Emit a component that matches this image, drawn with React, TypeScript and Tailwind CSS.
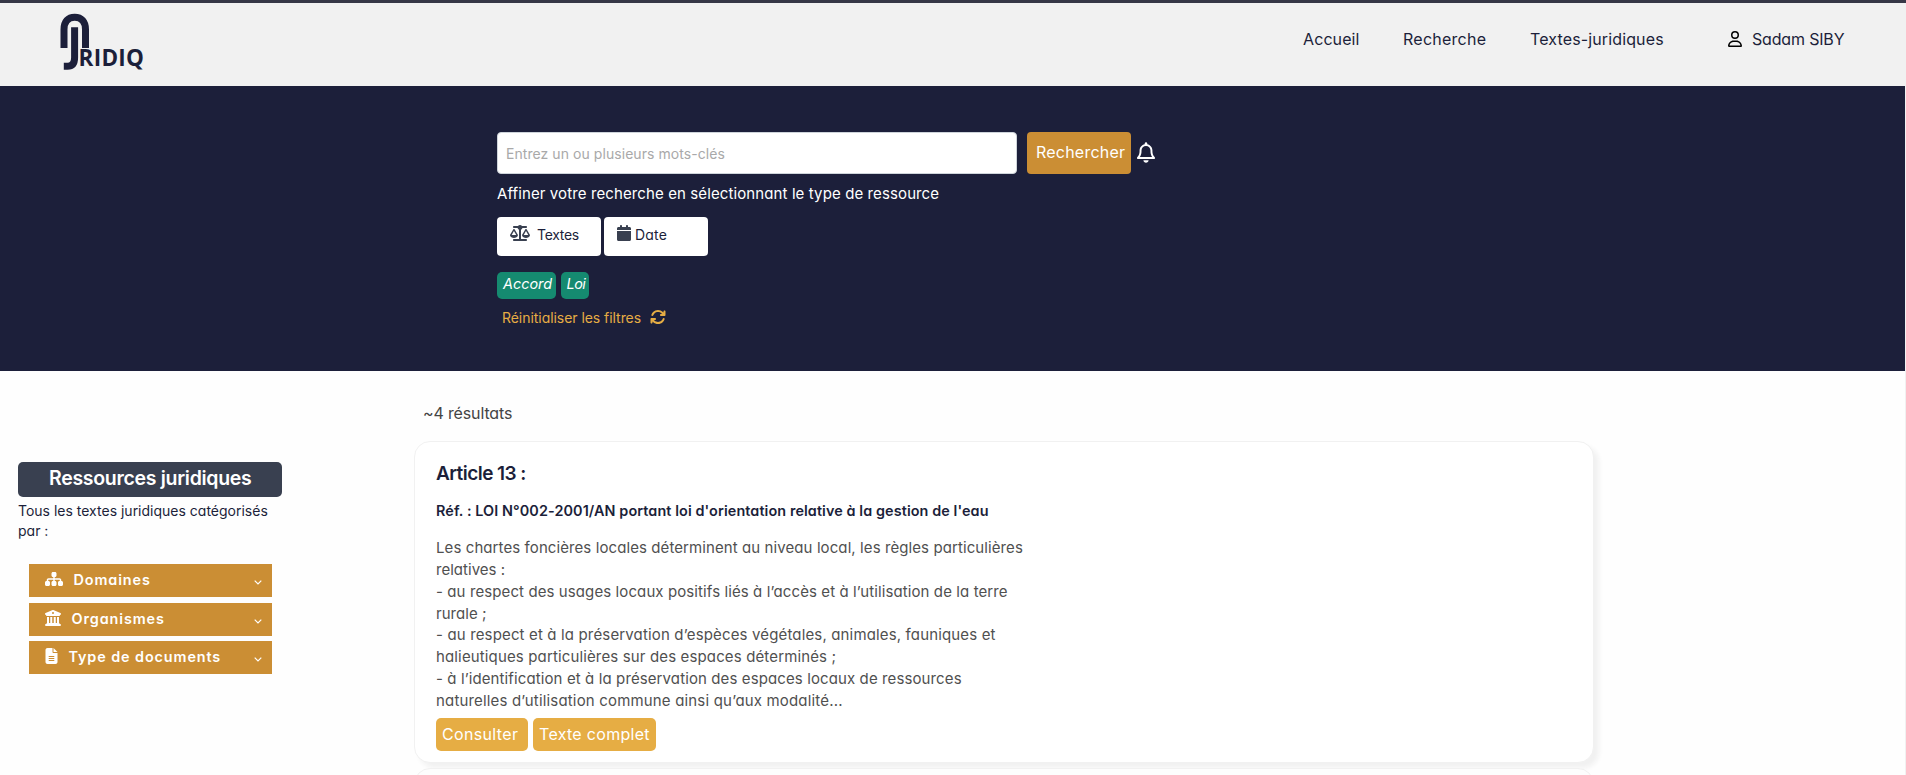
import React from "react";
import {
  FaArrowsRotate,
  FaBuildingColumns,
  FaCalendar,
  FaFileLines,
  FaRegBell,
  FaRegUser,
  FaScaleBalanced,
  FaSitemap,
} from "react-icons/fa6";

function Logo() {
  return (
    <svg width="90" height="62" viewBox="0 0 90 62" className="shrink-0" aria-label="Jridiq">
      <g transform="translate(-58 -11)">
        <path d="M64 48V29.5C64 21.5 68 17.3 74.7 17.3S85.5 21.5 85.5 29.5V48" fill="none" stroke="#1c1f3a" strokeWidth="7" />
        <path d="M74.6 27.3V57.5C74.6 63.5 72 66.3 67.5 66.3H63.8" fill="none" stroke="#1c1f3a" strokeWidth="7" />
        <text
          x="78.5"
          y="66"
          fontFamily="Open Sans, Noto Sans, sans-serif"
          fontWeight="700"
          fontSize="22.5"
          textLength="65.5"
          lengthAdjust="spacing"
          fill="#1c1f3a"
          stroke="#f1f1f1"
          strokeWidth="0.8"
          paintOrder="stroke"
        >
          RIDIQ
        </text>
      </g>
    </svg>
  );
}

function Header() {
  return (
    <header className="flex h-[86px] items-start border-t-[3px] border-[#363746] bg-[#f1f1f1] pl-[58px] text-base leading-6 text-[#1c1f3a]">
      <div className="pt-2">
        <Logo />
      </div>
      <nav className="ml-auto flex w-[603px] pt-[24px]">
        <a className="w-[100px] tracking-[0.1px]">Accueil</a>
        <a className="w-[127px] tracking-[0.25px]">Recherche</a>
        <a className="w-[198px] tracking-[0.13px]">Textes-juridiques</a>
        <a className="flex items-center">
          <FaRegUser className="h-4 w-3.5 text-black" />
          <span className="ml-[10px] tracking-[-0.17px]">Sadam SIBY</span>
        </a>
      </nav>
    </header>
  );
}

function Hero() {
  return (
    <section className="mr-px h-[285px] bg-[#1c1f3a] pl-[497px] pt-[46px]">
      <div className="flex items-center">
        <input
          className="h-[42px] w-[520px] rounded border border-[#ced4da] bg-white px-2 text-sm tracking-[0.06px] placeholder:text-[#a9a9a9]"
          placeholder="Entrez un ou plusieurs mots-clés"
        />
        <button className="ml-[10px] h-[42px] w-[104px] rounded bg-[#cb8e34] pb-[2px] pl-[9px] text-left text-base tracking-[0.22px] text-white">
          Rechercher
        </button>
        <FaRegBell className="mb-[2px] ml-1.5 h-[21px] w-[18px] text-white" />
      </div>
      <p className="mt-[8px] h-6 text-[15px] leading-6 tracking-[0.11px] text-white">
        Affiner votre recherche en sélectionnant le type de ressource
      </p>
      <div className="mt-[11px] flex gap-[3px] text-sm leading-5 text-[#1c1f3a]">
        <button className="flex h-[39px] w-[104px] items-start rounded bg-white pl-[13px] pt-2">
          <FaScaleBalanced className="h-4 w-5 text-[#394050]" />
          <span className="ml-[7px] tracking-[-0.3px]">Textes</span>
        </button>
        <button className="flex h-[39px] w-[104px] items-start rounded bg-white pl-[13px] pt-2">
          <FaCalendar className="h-4 w-3.5 text-[#394050]" />
          <span className="ml-1 tracking-[0.2px]">Date</span>
        </button>
      </div>
      <div className="mt-4 flex gap-[5px] text-[14.4px] italic leading-[24px] text-white">
        <span className="h-[27px] w-[59px] rounded-[5px] bg-[#158a70] pl-1.5">Accord</span>
        <span className="h-[27px] w-7 rounded-[5px] bg-[#158a70] pl-[5.5px] tracking-[-0.5px]">Loi</span>
      </div>
      <div className="mt-[9px] flex items-start pl-[5px] text-sm leading-5 text-[#e6ad44]">
        <span className="tracking-[-0.05px]">Réinitialiser les filtres</span>
        <FaArrowsRotate className="ml-[9px] mt-px h-4 w-4" />
      </div>
    </section>
  );
}

const categories = [
  { label: "Domaines", icon: <FaSitemap className="h-4 w-[18px]" />, spacing: "mb-[6px]" },
  { label: "Organismes", icon: <FaBuildingColumns className="h-4 w-4" />, spacing: "mb-[5px]" },
  { label: "Type de documents", icon: <FaFileLines className="h-4 w-[13px]" />, spacing: "" },
];

function Sidebar() {
  return (
    <aside className="w-[414px] shrink-0 pl-[18px] pt-[91px] text-[#1c1f3a]">
      <h2 className="h-[35px] w-[264px] rounded-[5px] bg-[#394050] pl-[31px] text-[19.5px] font-semibold leading-8 tracking-[-0.3px] text-white">
        Ressources juridiques
      </h2>
      <p className="mt-[4px] w-[264px] text-sm leading-5">
        Tous les textes juridiques catégorisés
        <br />
        par :
      </p>
      <ul className="ml-[11px] mt-[23px] w-[243px] text-white">
        {categories.map((c) => (
          <li key={c.label} className={`flex h-[33px] items-start bg-[#cb8e34] pl-4 pr-[10px] pt-[5px] ${c.spacing}`}>
            <span className="mt-[2px]">{c.icon}</span>
            <span className="ml-[10.5px] text-[14.4px] font-semibold leading-[21px] tracking-[0.9px]">{c.label}</span>
            <svg width="8" height="5" viewBox="0 0 8 5" className="ml-auto mt-[11px]">
              <path d="M.7.7 4 4 7.3.7" fill="none" stroke="currentColor" strokeWidth="1.2" />
            </svg>
          </li>
        ))}
      </ul>
    </aside>
  );
}

function Results() {
  return (
    <div className="w-[1180px]">
      <p className="pl-[9px] pt-[30px] text-base leading-6 tracking-[-0.14px] text-[#444]">~4 résultats</p>
      <article className="mt-4 h-[322px] rounded-2xl border border-[#f1f1f1] bg-white pl-[21px] shadow-[5px_5px_5px_#f1f1f1]">
        <h3 className="pt-[16px] text-[19px] font-semibold leading-8 tracking-[-0.55px] text-[#1c1f3a]">Article 13 :</h3>
        <h4 className="mt-[9px] text-[14.4px] font-semibold leading-6 tracking-[0.094px] text-[#1c1f3a]">
          Réf. : LOI N°002-2001/AN portant loi d'orientation relative à la gestion de l'eau
        </h4>
        <div className="mt-[14px] whitespace-nowrap text-[15px] leading-[21.84px] text-[#505050]">
          <p className="tracking-[0.09px]">Les chartes foncières locales déterminent au niveau local, les règles particulières</p>
          <p className="tracking-[0.03px]">relatives :</p>
          <p className="tracking-[0.1px]">- au respect des usages locaux positifs liés à l’accès et à l’utilisation de la terre</p>
          <p className="tracking-[0.04px]">rurale ;</p>
          <p className="tracking-[0.15px]">- au respect et à la préservation d’espèces végétales, animales, fauniques et</p>
          <p className="tracking-[0.14px]">halieutiques particulières sur des espaces déterminés ;</p>
          <p className="tracking-[0.11px]">- à l’identification et à la préservation des espaces locaux de ressources</p>
          <p className="tracking-[0.17px]">naturelles d’utilisation commune ainsi qu’aux modalité...</p>
        </div>
        <div className="mt-[6px] flex gap-[5px] text-base leading-8 text-white">
          <button className="h-[33px] w-[92px] rounded-[5px] bg-[#e6ad44] pl-1.5 text-left tracking-[0.34px]">Consulter</button>
          <button className="h-[33px] w-[123px] rounded-[5px] bg-[#e6ad44] pl-1.5 text-left tracking-[0.3px]">Texte complet</button>
        </div>
      </article>
      <article className="mt-[5px] h-[321px] rounded-2xl border border-[#f1f1f1] bg-[#fdfdfd]" />
    </div>
  );
}

export default function App() {
  return (
    <div className="h-[775px] overflow-hidden bg-[#f1f1f1] font-['Inter',sans-serif] [font-feature-settings:'cv11']">
      <Header />
      <Hero />
      <main className="mr-px flex h-[404px] overflow-hidden bg-[#fefefe]">
        <Sidebar />
        <Results />
      </main>
    </div>
  );
}
